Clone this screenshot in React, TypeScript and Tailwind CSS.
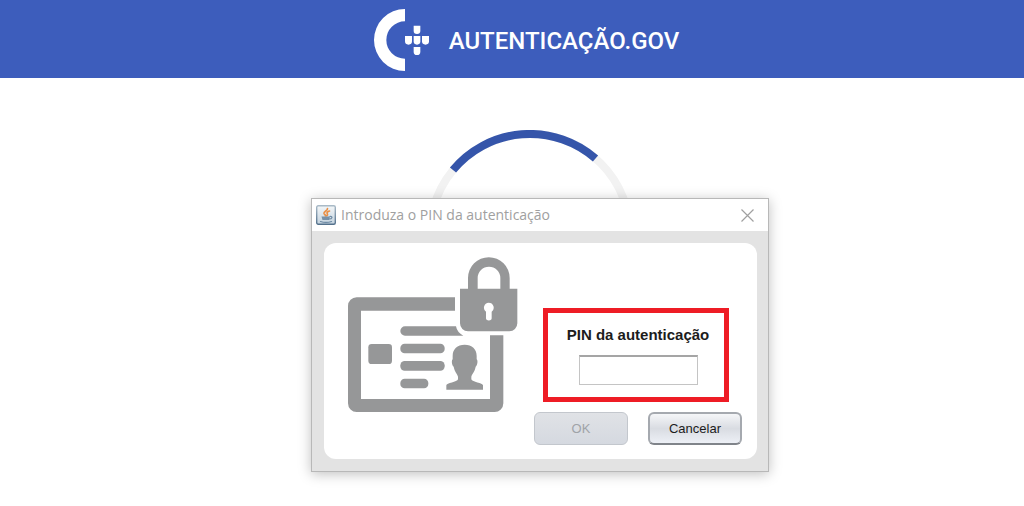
import { useState } from "react";

const Logo = () => (
  <svg width="56" height="62" viewBox="0 0 168 186" fill="#fff" aria-hidden="true">
    <path d="M96 0v37a56 56 0 0 0 0 112v37A93 93 0 0 1 96 0Z" />
    <path d="M122 50h20v16a10 9 0 0 1-20 0Z" />
    <path d="M96 81h21v16a10.500 10 0 0 1-21 0Z" />
    <path d="M122 81h20v16a10 10 0 0 1-20 0Z" />
    <path d="M147 81h21v16a10.500 10 0 0 1-21 0Z" />
    <path d="M122 114h20v14a10 10 0 0 1-20 0Z" />
  </svg>
);

const LoadingRing = () => (
  <svg
    className="ml-9 mt-[52px]"
    width="208"
    height="208"
    viewBox="0 0 208 208"
    fill="none"
    strokeWidth="8"
    role="img"
    aria-label="A carregar"
  >
    <circle cx="104" cy="104" r="100" stroke="#f2f2f2" />
    <path d="M27 40A100 100 0 0 1 169.500 28.500" stroke="#3555aa" />
  </svg>
);

const JavaIcon = () => (
  <svg width="20" height="20" viewBox="0 0 20 20" fill="none" aria-hidden="true">
    <defs>
      <linearGradient id="java-bg" x1="0" y1="0" x2="0" y2="1">
        <stop offset="0" stopColor="#f4f7f9" />
        <stop offset="1" stopColor="#c3d2de" />
      </linearGradient>
      <linearGradient id="java-border" x1="0" y1="0" x2="0" y2="1">
        <stop offset="0" stopColor="#a9bac7" />
        <stop offset="1" stopColor="#54718c" />
      </linearGradient>
    </defs>
    <rect x="0.700" y="0.700" width="18.600" height="18.600" rx="1.500" fill="url(#java-bg)" stroke="url(#java-border)" strokeWidth="1.400" />
    <path d="M11.500 3.500c.5 2-4 3-3.500 5 .3.900 1.400 1.200 1.500 2.300M13.500 6c-2 .6-3 1.500-2.200 2.700.5.800.2 1.600-.5 2.100" stroke="#ea8f45" strokeWidth="1.700" strokeLinecap="round" />
    <path d="M5.500 11.500h8.500l-1 3.500H6.500Z" fill="#7891a8" />
    <path d="M14 11.500c3-.5 2.500 2.500-1 2.500M4.500 16.500c3 1 8 1 11 0" stroke="#6c89a3" strokeWidth="1.200" strokeLinecap="round" />
  </svg>
);

const CardLock = () => (
  <svg
    className="ml-4 mt-[7px] shrink-0"
    width="190"
    height="170"
    viewBox="0 0 570 510"
    fill="#969798"
    aria-hidden="true"
  >
    <path d="M345 142H50a26 26 0 0 0-26 26v292a26 26 0 0 0 26 26h414a26 26 0 0 0 26-26V256h-40v191H63V182h282Z" />
    <rect x="85" y="282" width="71" height="60" rx="10" />
    <path d="M195 229h153q3 18 22 28H195a14 14 0 0 1 0-28Z" />
    <rect x="181" y="281" width="133" height="29" rx="13" />
    <rect x="181" y="333" width="133" height="29" rx="13" />
    <rect x="181" y="386" width="84" height="29" rx="13" />
    <path d="M374 284c-22 0-36 13-36 34v10c-4 2-3 18 3 22 3 16 11 21 13 30v8c-2 8-35 11-35 18v13h110v-13c0-7-33-10-35-18v-8c2-9 10-14 13-30 6-4 7-20 3-22v-10c0-21-14-34-36-34Z" />
    <path
      fillRule="evenodd"
      d="M360 116h24V84a62 62 0 0 1 125 0v32h23v104a24 24 0 0 1-24 24H384a24 24 0 0 1-24-24ZM413 116h68V84a34 34 0 0 0-68 0ZM446 158a15 15 0 0 0-8 27v20a8 6 0 0 0 17 0v-20a15 15 0 0 0-9-27Z"
    />
  </svg>
);

const PinDialog = () => {
  const [pin, setPin] = useState("");

  return (
    <div
      role="dialog"
      aria-labelledby="dialog-title"
      className="absolute left-1/2 top-[120px] ml-7 w-[458px] -translate-x-1/2 border border-[#b8b8b8] bg-[#e3e3e3] shadow-[0_2px_12px_rgba(0,0,0,0.25)]"
    >
      <div className="flex h-8 items-center bg-white pl-1 pr-3.5">
        <JavaIcon />
        <h1
          id="dialog-title"
          className="ml-[5px] flex-1 font-['Open_Sans','Noto_Sans',sans-serif] text-sm text-[#a0a0a0]"
        >
          Introduza o PIN da autenticação
        </h1>
        <button type="button" aria-label="Fechar">
          <svg width="13" height="13" viewBox="0 0 13 13" stroke="#a0a0a0" strokeWidth="1.200">
            <path d="M0.500 0.500l12 12M12.500 0.500l-12 12" />
          </svg>
        </button>
      </div>
      <form
        className="m-3 mr-[11px] flex justify-between rounded-xl bg-white"
        onSubmit={(e) => e.preventDefault()}
      >
        <CardLock />
        <div className="mr-[15px] flex flex-col pb-3.5 pt-[65px]">
          <div className="ml-[9px] flex h-[94px] w-[186px] flex-col items-center border-5 border-[#ee1c25] pl-1 pt-3">
            <label htmlFor="pin" className="text-[15px] font-bold leading-5 text-[#1c1c1c]">
              PIN da autenticação
            </label>
            <input
              id="pin"
              type="password"
              value={pin}
              onChange={(e) => setPin(e.target.value)}
              className="mt-2.5 h-[30px] w-[119px] border border-t-2 border-[#c4c4c4] border-t-[#a5a5a5] bg-white px-1.5 outline-none"
            />
          </div>
          <div className="mt-2.5 flex gap-5">
            <button
              type="submit"
              disabled={!pin}
              className="h-[33px] w-[94px] rounded-md border border-[#c3c7cd] bg-linear-to-b from-[#e0e2e6] to-[#d5d9e0] text-[13px] text-[#a0a3a8]"
            >
              OK
            </button>
            <button
              type="button"
              className="h-[33px] w-[94px] rounded-md border-2 border-[#a5a9af] border-b-[#80848a] bg-linear-to-b from-[#f5f6f8] via-[#d9dce2] to-[#edf0f6] text-[13px] text-[#1c1c1c]"
            >
              Cancelar
            </button>
          </div>
        </div>
      </form>
    </div>
  );
};

const App = () => {
  return (
    <div className="min-h-screen bg-white font-['Liberation_Sans',Arial,sans-serif]">
      <header className="flex h-[78px] items-center justify-center gap-5 bg-[#3d5dbc] pl-7 pt-0.5">
        <Logo />
        <span className="mt-0.5 font-[Roboto,sans-serif] text-2xl font-medium text-white">
          AUTENTICAÇÃO.GOV
        </span>
      </header>
      <main className="relative flex min-h-[420px] justify-center">
        <LoadingRing />
        <PinDialog />
      </main>
    </div>
  );
};

export default App;
